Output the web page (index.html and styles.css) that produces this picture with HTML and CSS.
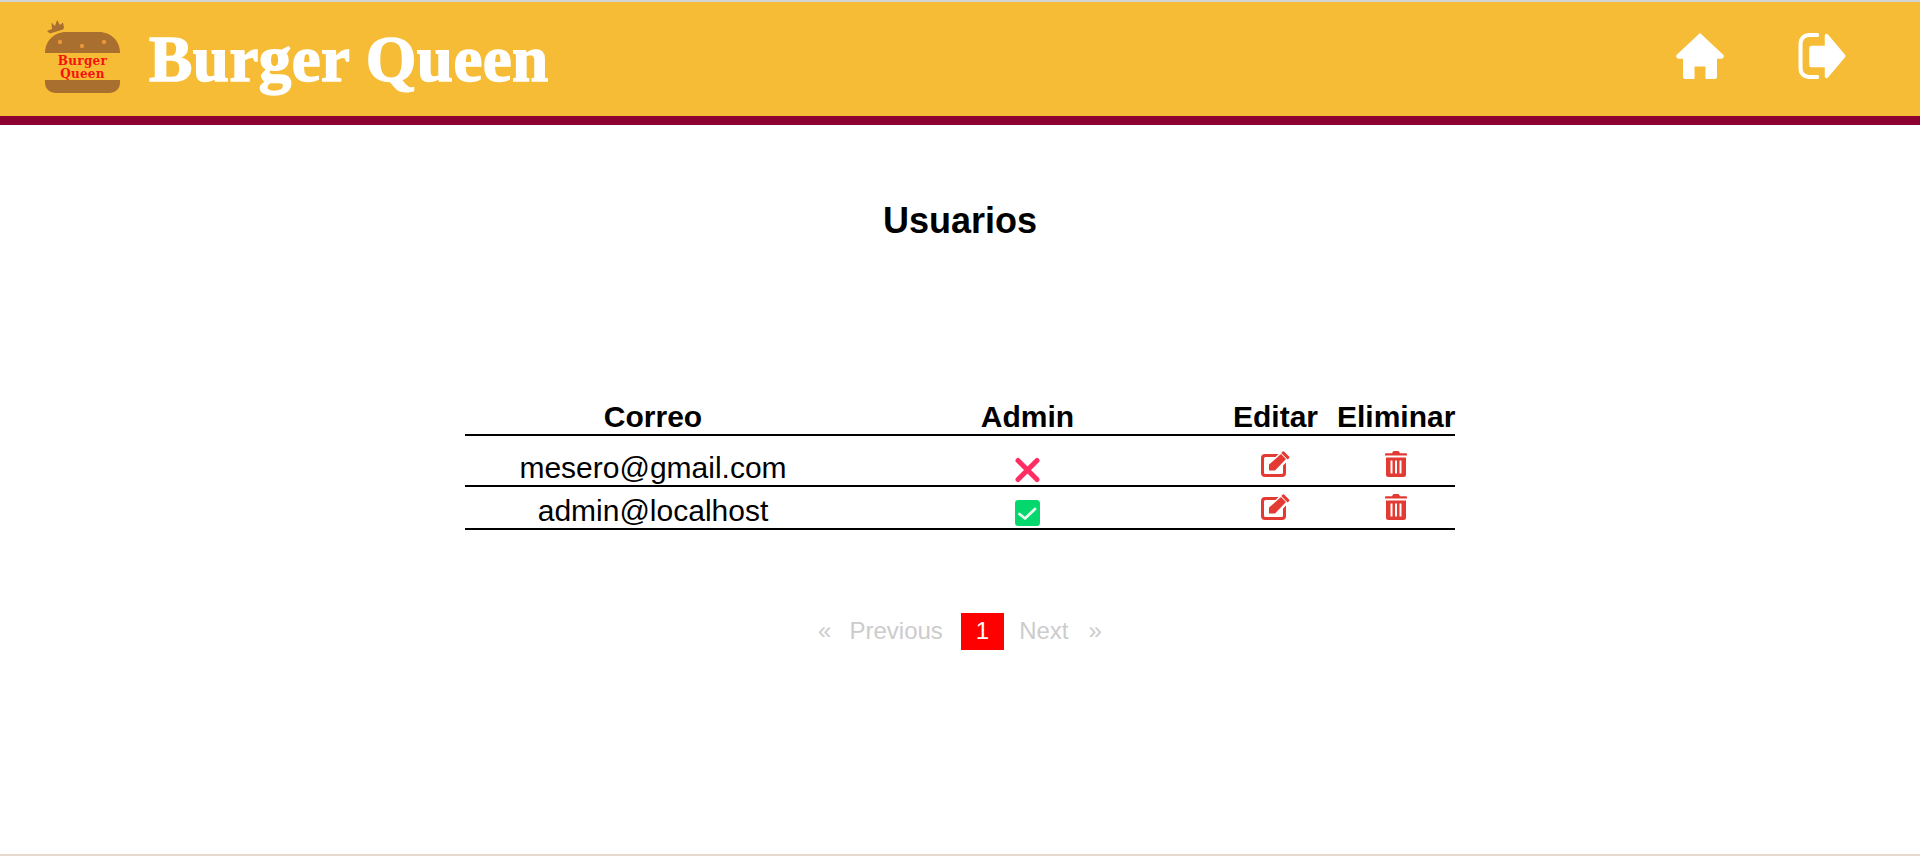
FILE: index.html
```html
<!DOCTYPE html>
<html lang="es">
<head>
<meta charset="utf-8">
<title>Burger Queen</title>
<link rel="stylesheet" href="styles.css">
</head>
<body>
<svg class="defs" width="0" height="0" aria-hidden="true">
  <symbol id="i-edit" viewBox="0 0 29 26">
    <path d="M4 3h13.500l-3 3H4.500a1.500 1.500 0 0 0-1.500 1.500v14a1.500 1.500 0 0 0 1.500 1.500h16a1.500 1.500 0 0 0 1.500-1.500v-7l3-3V22a4 4 0 0 1-4 4H4a4 4 0 0 1-4-4V7a4 4 0 0 1 4-4z"/>
    <path d="M8 13.500 20 3l5 5-11 11.500H8zM21.500.8a1.300 1.300 0 0 1 1.800 0l4.700 4.600a1.300 1.300 0 0 1 0 1.800l-1.300 1.300-6.500-6.400z"/>
  </symbol>
  <symbol id="i-trash" viewBox="0 0 22 26">
    <path d="M7 2.200 8 .6A1.300 1.300 0 0 1 9 0h4a1.300 1.300 0 0 1 1 .6l1 1.600h6a1 1 0 0 1 1 1v1.300H0V3.200a1 1 0 0 1 1-1z"/>
    <path fill-rule="evenodd" d="M1 6.500h20V23.500a2.500 2.500 0 0 1-2.500 2.500h-15A2.500 2.500 0 0 1 1 23.500zM5.500 9.500v13h2v-13zM10 9.500v13h2v-13zM14.500 9.500v13h2v-13z"/>
  </symbol>
  <symbol id="i-x" viewBox="0 0 25 26">
    <path d="M3 3.500 22 22.500M22 3.500 3 22.500" fill="none" stroke="#ff2d62" stroke-width="5" stroke-linecap="round"/>
  </symbol>
  <symbol id="i-check" viewBox="0 0 25 26">
    <rect width="25" height="26" rx="3.500" fill="#04d76b"/>
    <path d="M4.500 14 10 18.500 20 9" fill="none" stroke="#e8fbf0" stroke-width="2.800" stroke-linecap="round" stroke-linejoin="round"/>
  </symbol>
</svg>

<header class="topbar">
  <div class="brand">
    <svg class="logo" viewBox="0 0 75 73" role="img" aria-label="Logo">
      <path class="logo-crown" d="M2 11 7 9 6.500 2.500 10 6 12 0l3 5 3-2.500 1 5.500-1 1.500-13 4z"/>
      <path class="logo-bun" d="M0 33C0 21 9 12 21 12h33c12 0 21 9 21 21z"/>
      <path class="logo-bun" d="M0 60h75v3a10 10 0 0 1-10 10H10A10 10 0 0 1 0 63z"/>
      <circle class="logo-seed" cx="15" cy="22" r="2.200"/>
      <circle class="logo-seed" cx="37" cy="26" r="2.200"/>
      <circle class="logo-seed" cx="59" cy="22" r="2.200"/>
      <text class="logo-text" x="37.500" y="45">Burger</text>
      <text class="logo-text" x="37.500" y="58">Queen</text>
    </svg>
    <span class="brand-name">Burger Queen</span>
  </div>
  <nav class="topnav">
    <a class="nav-link" href="#" aria-label="Inicio">
      <svg class="nav-icon" viewBox="0 0 48 46"><path d="M24 0 47 21.500a2.400 2.400 0 0 1 .3 3 2.200 2.200 0 0 1-2 1.200H41V43.500a2.300 2.300 0 0 1-2.300 2.500H29.500V33.500h-11V46H9.300A2.300 2.300 0 0 1 7 43.500V25.700H2.700a2.200 2.200 0 0 1-2-1.200 2.400 2.400 0 0 1 .3-3z"/></svg>
    </a>
    <a class="nav-link" href="#" aria-label="Salir">
      <svg class="nav-icon" viewBox="0 0 46 45"><path d="M10 0h9a1 1 0 0 1 1 1v2a1 1 0 0 1-1 1h-9a6 6 0 0 0-6 6v25a6 6 0 0 0 6 6h9a1 1 0 0 1 1 1v2a1 1 0 0 1-1 1h-9A10 10 0 0 1 0 35V10A10 10 0 0 1 10 0z"/><path d="M26 1.500c.5-.8 1.800-1 2.600-.2L45.400 21c.8.900.8 2.100 0 3L28.600 43.700c-.8.800-2.100.6-2.600-.2-.2-.3-.3-.6-.3-1V33.500H13a2.500 2.500 0 0 1-2.500-2.500V15a2.500 2.500 0 0 1 2.500-2.500h12.700V2.500c0-.4.100-.7.300-1z"/></svg>
    </a>
  </nav>
</header>

<main class="content">
  <h1 class="page-title">Usuarios</h1>
  <table class="users">
    <thead>
      <tr>
        <th class="col-mail">Correo</th>
        <th class="col-admin">Admin</th>
        <th class="col-edit">Editar</th>
        <th class="col-del">Eliminar</th>
      </tr>
    </thead>
    <tbody>
      <tr class="row-first">
        <td>mesero@gmail.com</td>
        <td><svg class="flag"><use href="#i-x"/></svg></td>
        <td class="action"><svg class="ico-edit"><use href="#i-edit"/></svg></td>
        <td class="action"><svg class="ico-trash"><use href="#i-trash"/></svg></td>
      </tr>
      <tr class="row-next">
        <td>admin@localhost</td>
        <td><svg class="flag"><use href="#i-check"/></svg></td>
        <td class="action"><svg class="ico-edit"><use href="#i-edit"/></svg></td>
        <td class="action"><svg class="ico-trash"><use href="#i-trash"/></svg></td>
      </tr>
    </tbody>
  </table>
  <div class="pager">
    <span class="pg">«</span>
    <span class="pg">Previous</span>
    <span class="pg pg-current">1</span>
    <span class="pg pg-next">Next</span>
    <span class="pg">»</span>
  </div>
</main>
</body>
</html>
```
FILE: styles.css
```css
* { box-sizing: border-box; }
html, body { margin: 0; padding: 0; }
body {
  height: 856px;
  overflow: hidden;
  background: #fff;
  border-top: 2px solid #d4d4d4;
  border-bottom: 2px solid #e6d8cc;
  font-family: "Liberation Sans", Arial, sans-serif;
  color: #000;
}
.defs { position: absolute; }
.topbar {
  height: 123px;
  background: #f7bc35;
  border-bottom: 9px solid #8b0030;
  display: flex;
  align-items: flex-start;
  justify-content: space-between;
  padding: 18px 74px 0 45px;
}
.brand { display: flex; align-items: flex-start; gap: 29px; }
.logo { width: 75px; height: 73px; flex: none; }
.logo-crown { fill: #a86f2e; }
.logo-bun { fill: #a86f2e; }
.logo-seed { fill: #e8963a; }
.logo-text {
  font-family: "DejaVu Serif", serif;
  font-size: 12px;
  font-weight: 700;
  letter-spacing: .3px;
  fill: #f5120f;
  text-anchor: middle;
}
.brand-name {
  font-family: "Liberation Serif", serif;
  font-weight: 700;
  font-size: 65px;
  line-height: 70px;
  letter-spacing: .45px;
  margin-top: 4px;
  color: #fff;
  white-space: nowrap;
  -webkit-text-stroke: 1.500px #fff;
}
.topnav { display: flex; align-items: flex-start; gap: 74px; padding-top: 13px; }
.nav-link { display: block; line-height: 0; }
.nav-icon { width: 48px; height: 46px; fill: #fff; }
.content { display: flex; flex-direction: column; align-items: center; }
.page-title {
  margin: 74px 0 0;
  font-size: 36px;
  line-height: 44px;
  font-weight: 700;
}
.users {
  margin-top: 157px;
  width: 990px;
  table-layout: fixed;
  border-collapse: collapse;
  font-size: 30px;
}
.users th {
  font-size: 30px;
  font-weight: 700;
  line-height: 34px;
  padding: 0;
  border-bottom: 2px solid #000;
}
.col-mail { width: 376px; }
.col-admin { width: 373px; }
.col-edit { width: 123px; }
.col-del { width: 118px; }
.users td {
  padding: 0;
  text-align: center;
  vertical-align: bottom;
  border-bottom: 2px solid #000;
  line-height: 34px;
}
.row-first { height: 51px; }
.row-next { height: 43px; }
.users svg { display: inline-block; vertical-align: bottom; }
.flag { width: 25px; height: 26px; margin-bottom: 2px; }
.action svg { fill: #e33a33; margin-bottom: 8px; }
.ico-edit { width: 29px; height: 26px; }
.ico-trash { width: 22px; height: 26px; }
.pager {
  margin-top: 83px;
  display: flex;
  align-items: center;
  gap: 18px;
  font-size: 24px;
  color: #ccc;
}
.pg { padding: 4px 0 6px; line-height: 27px; }
.pg-current { padding: 4px 15px 6px; background: #f00; color: #fff; }
.pg-next { margin: 0 2px 0 -3px; }
```
